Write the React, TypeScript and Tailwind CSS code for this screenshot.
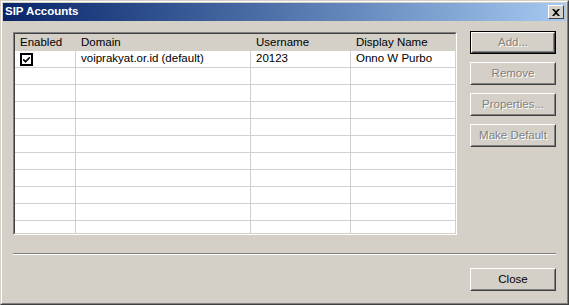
import React from 'react';

type Account = {
  enabled: boolean;
  domain: string;
  username: string;
  displayName: string;
};

const accounts: Account[] = [
  { enabled: true, domain: 'voiprakyat.or.id (default)', username: '20123', displayName: 'Onno W Purbo' },
];

const EMPTY_ROWS = 10;

const Checkbox: React.FC<{ checked: boolean }> = ({ checked }) => (
  <svg width="13" height="13" viewBox="0 0 13 13" className="block">
    <rect x="1" y="1" width="11" height="11" fill="#fff" stroke="#000" strokeWidth="2" />
    {checked && <path d="M3.5 6 L5.5 8 L9.5 4 L9.5 5.5 L5.5 9.5 L3.5 7.5 Z" fill="#000" stroke="#000" strokeWidth="0.8" />}
  </svg>
);

// classic raised 3D button
const Button: React.FC<{ label: string; disabled?: boolean; isDefault?: boolean }> = ({ label, disabled, isDefault }) => (
  <div className={`w-[86px] h-[23px] ${isDefault ? 'border border-black' : ''}`}>
    <div className="h-full border border-t-white border-l-white border-r-[#404040] border-b-[#404040]">
      <div className="h-full flex items-center justify-center border border-t-[#d4d0c8] border-l-[#d4d0c8] border-r-[#808080] border-b-[#808080]">
        <span
          className={`text-[11.5px] ${disabled ? 'text-[#808080] [text-shadow:1px_1px_0_#fff]' : 'text-black'}`}
        >
          {label}
        </span>
      </div>
    </div>
  </div>
);

const cols = ['w-[61px]', 'w-[175px]', 'w-[100px]', 'w-[104px]'];

const App: React.FC = () => {
  return (
    <div className="w-[569px] h-[305px] bg-[#d4d0c8] font-['Liberation_Sans',Arial,sans-serif] text-black select-none">
      {/* window frame */}
      <div className="w-full h-full border border-t-[#d4d0c8] border-l-[#d4d0c8] border-r-[#404040] border-b-[#404040]">
        <div className="w-full h-full border border-t-white border-l-white border-r-[#808080] border-b-[#808080] p-px flex flex-col">
          {/* title bar */}
          <div className="h-[18px] flex items-center justify-between bg-gradient-to-r from-[#0a246a] to-[#a6caf0] pl-[2px] pr-[2px]">
            <span className="text-[11.5px] font-bold text-white">SIP Accounts</span>
            <div className="w-[16px] h-[14px] bg-[#d4d0c8] border border-t-white border-l-white border-r-[#404040] border-b-[#404040] flex items-center justify-center">
              <svg width="8" height="7" viewBox="0 0 8 7">
                <path d="M0 0 L2 0 L4 2 L6 0 L8 0 L5 3.5 L8 7 L6 7 L4 5 L2 7 L0 7 L3 3.5 Z" fill="#000" />
              </svg>
            </div>
          </div>

          {/* body */}
          <div className="flex pl-[10px] pt-[11px]">
            {/* list view */}
            <div className="w-[444px] h-[203px] border border-t-[#808080] border-l-[#808080] border-r-white border-b-white">
              <div className="w-full h-full border border-t-[#404040] border-l-[#404040] border-r-[#d4d0c8] border-b-[#d4d0c8] bg-white overflow-hidden">
                <div className="flex h-[17px] bg-[#d4d0c8] text-[11.5px] items-center">
                  <div className={`${cols[0]} pl-[5px]`}>Enabled</div>
                  <div className={`${cols[1]} pl-[5px]`}>Domain</div>
                  <div className={`${cols[2]} pl-[5px]`}>Username</div>
                  <div className={`${cols[3]} pl-[5px]`}>Display Name</div>
                </div>
                {accounts.map((a) => (
                  <div key={a.domain} className="flex h-[17px] text-[11.5px] border-b border-[#d0d0d0]">
                    <div className={`${cols[0]} pl-[5px] flex items-center border-r border-[#d0d0d0]`}>
                      <Checkbox checked={a.enabled} />
                    </div>
                    <div className={`${cols[1]} pl-[5px] flex items-center border-r border-[#d0d0d0]`}>{a.domain}</div>
                    <div className={`${cols[2]} pl-[5px] flex items-center border-r border-[#d0d0d0]`}>{a.username}</div>
                    <div className={`${cols[3]} pl-[5px] flex items-center`}>{a.displayName}</div>
                  </div>
                ))}
                {Array.from({ length: EMPTY_ROWS }).map((_, i) => (
                  <div key={i} className="flex h-[17px] border-b border-[#d0d0d0]">
                    <div className={`${cols[0]} border-r border-[#d0d0d0]`} />
                    <div className={`${cols[1]} border-r border-[#d0d0d0]`} />
                    <div className={`${cols[2]} border-r border-[#d0d0d0]`} />
                    <div className={cols[3]} />
                  </div>
                ))}
              </div>
            </div>

            {/* side buttons */}
            <div className="ml-[13px] -mt-px flex flex-col gap-[8px]">
              <Button label="Add..." disabled isDefault />
              <Button label="Remove" disabled />
              <Button label="Properties..." disabled />
              <Button label="Make Default" disabled />
            </div>
          </div>

          {/* separator */}
          <div className="ml-[10px] mr-[10px] mt-[18px] border-t border-[#808080] border-b border-b-white" />

          {/* footer */}
          <div className="flex justify-end pr-[10px] mt-[13px]">
            <Button label="Close" />
          </div>
        </div>
      </div>
    </div>
  );
};

export default App;
